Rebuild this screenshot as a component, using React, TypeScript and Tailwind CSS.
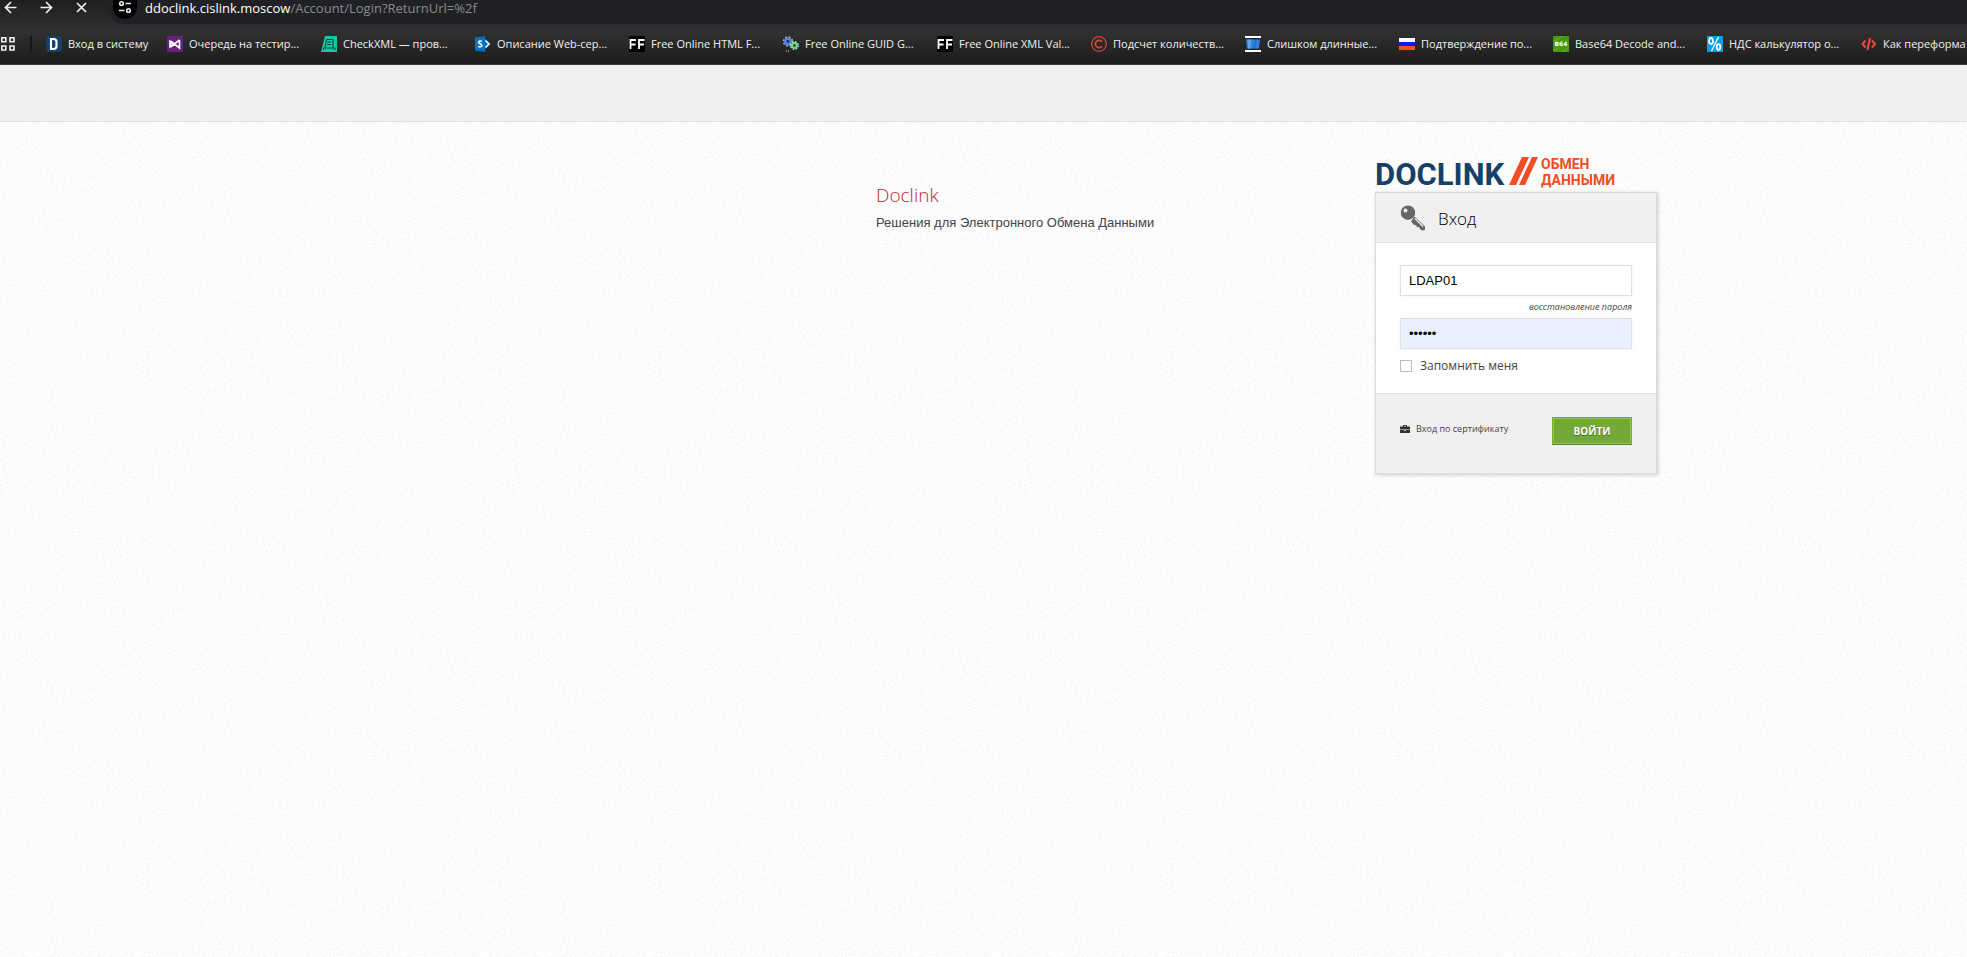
import React from 'react';

const DIcon: React.FC = () => (
    <svg width="16" height="16" viewBox="0 0 16 16" fill="none" className="shrink-0">
        <rect width="16" height="16" rx="3" fill="#163f66" />
        <path d="M5 3H7.500A3 3 0 0110.500 6v4a3 3 0 01-3 3H5z" stroke="#fff" strokeWidth="2.200" />
    </svg>
);

const VisualStudioIcon: React.FC = () => (
    <svg width="16" height="16" viewBox="0 0 16 16" fill="none" className="shrink-0">
        <rect width="16" height="16" fill="#68217a" />
        <path d="M3 5.500v5l2.500-2.500L3 5.500zM12.500 4v8L3.500 5M12.500 4L3.500 11" stroke="#fff" strokeWidth="1.600" />
    </svg>
);

const CheckXmlIcon: React.FC = () => (
    <svg width="16" height="16" viewBox="0 0 16 16" fill="none" className="shrink-0">
        <path d="M4 0h12v16H0z" fill="#0fc9a5" />
        <path d="M5.500 3.500H12v8.500M5.500 3.500L4 12M6.500 6h3.500M6 8.500h4M2.500 14v-2H14v2" stroke="#1d3d3b" />
    </svg>
);

const SharePointIcon: React.FC = () => (
    <svg width="16" height="16" viewBox="0 0 16 16" fill="none" className="shrink-0">
        <path d="M0 1.500L10 0v16L0 14.500z" fill="#0072c6" />
        <path d="M10 2.500l6 5.500-6 5.500z" fill="#0072c6" />
        <path d="M10.500 4.500L14 8l-3.500 3.500" stroke="#fff" strokeWidth="1.500" />
        <path d="M7 5.500C5.500 4.500 3.500 5 3.500 6.300 3.500 8 7 7.500 7 9.500c0 1.500-2.200 1.800-3.700.8" stroke="#fff" strokeWidth="1.400" />
    </svg>
);

const FreeFormatterIcon: React.FC = () => (
    <svg width="16" height="16" viewBox="0 0 16 16" fill="none" className="shrink-0">
        <rect width="16" height="16" fill="#000" />
        <path d="M1.500 13V4H7M1.500 8.500h5M10 13V4h5.500M10 8.500h5" stroke="#fff" strokeWidth="1.800" />
    </svg>
);

const GearsIcon: React.FC = () => (
    <svg width="16" height="16" viewBox="0 0 16 16" fill="none" className="shrink-0">
        <circle cx="5" cy="5.500" r="4.300" stroke="#a9c1f0" strokeWidth="1.800" strokeDasharray="1.700 1.700" />
        <circle cx="5" cy="5.500" r="2.700" stroke="#5584e0" strokeWidth="2.600" />
        <circle cx="11.500" cy="9.500" r="3.800" stroke="#b4efb9" strokeWidth="1.600" strokeDasharray="1.500 1.500" />
        <circle cx="11.500" cy="9.500" r="2.300" stroke="#6fd886" strokeWidth="2.200" />
        <path d="M3 15h1M5 15h1" stroke="#ddd" />
    </svg>
);

const CopyrightIcon: React.FC = () => (
    <svg width="16" height="16" viewBox="0 0 16 16" fill="none" stroke="#d6423b" className="shrink-0">
        <circle cx="8" cy="8" r="7.300" strokeWidth="1.300" />
        <path d="M11 5.800a3.700 3.700 0 100 4.400" strokeWidth="1.700" />
    </svg>
);

const WindowIcon: React.FC = () => (
    <svg width="16" height="16" viewBox="0 0 16 16" fill="none" className="shrink-0">
        <rect width="16" height="16" fill="#fff" />
        <rect y="2" width="16" height="12" fill="#1d2733" />
        <path d="M1 3.500h14L14 12.500H2z" fill="#2f7fd8" />
        <path d="M2.500 3.500h4l-1 9H3z" fill="#5ba2e8" />
        <path d="M11 3.500L9.500 12.500" stroke="#1f62b4" />
    </svg>
);

const FlagIcon: React.FC = () => (
    <svg width="16" height="16" viewBox="0 0 16 16" fill="none" className="shrink-0">
        <rect y="2" width="16" height="4" fill="#fff" />
        <rect y="6" width="16" height="4" fill="#1414f5" />
        <rect y="10" width="16" height="4" fill="#f0501c" />
    </svg>
);

const Base64Icon: React.FC = () => (
    <svg width="16" height="16" viewBox="0 0 16 16" fill="none" className="shrink-0">
        <rect width="16" height="16" rx="1" fill="#459b0b" />
        <path d="M0 5Q6 4 9 0M0 14Q5 14 6 11M8 16q6-1 8-6" stroke="#65b52c" />
        <text x="8" y="10" textAnchor="middle" fontSize="6" fontWeight="700" fill="#fff" fontFamily="DejaVu Sans, sans-serif">B64</text>
    </svg>
);

const PercentIcon: React.FC = () => (
    <svg width="16" height="16" viewBox="0 0 16 16" fill="none" stroke="#fff" className="shrink-0">
        <rect width="16" height="16" fill="#009fe3" stroke="none" />
        <ellipse cx="4" cy="5" rx="2" ry="3" strokeWidth="1.800" />
        <ellipse cx="11.500" cy="11" rx="1.800" ry="2.800" strokeWidth="1.800" />
        <path d="M11.500 1L4.500 15" strokeWidth="1.400" />
    </svg>
);

const CodeIcon: React.FC = () => (
    <svg width="16" height="16" viewBox="0 0 16 16" fill="none" stroke="#e8473b" strokeWidth="2.200" className="shrink-0">
        <path d="M4.500 4.500L1.500 8l3 3.500M11 4.500L14 8l-3 3.500M9 2L6.500 14" />
    </svg>
);

const BOOKMARKS = [
    { title: 'Вход в систему', icon: <DIcon />, width: 'w-[121px]' },
    { title: 'Очередь на тестир...', icon: <VisualStudioIcon />, width: 'w-[154px]' },
    { title: 'CheckXML — пров...', icon: <CheckXmlIcon />, width: 'w-[154px]' },
    { title: 'Описание Web-сер...', icon: <SharePointIcon />, width: 'w-[154px]' },
    { title: 'Free Online HTML F...', icon: <FreeFormatterIcon />, width: 'w-[154px]' },
    { title: 'Free Online GUID G...', icon: <GearsIcon />, width: 'w-[154px]' },
    { title: 'Free Online XML Val...', icon: <FreeFormatterIcon />, width: 'w-[154px]' },
    { title: 'Подсчет количеств...', icon: <CopyrightIcon />, width: 'w-[154px]' },
    { title: 'Слишком длинные...', icon: <WindowIcon />, width: 'w-[154px]' },
    { title: 'Подтверждение по...', icon: <FlagIcon />, width: 'w-[154px]' },
    { title: 'Base64 Decode and...', icon: <Base64Icon />, width: 'w-[154px]' },
    { title: 'НДС калькулятор о...', icon: <PercentIcon />, width: 'w-[154px]' },
    { title: 'Как переформа', icon: <CodeIcon />, width: 'w-[154px]' },
];

const BrowserBar: React.FC = () => (
    <header className="overflow-hidden border-b border-[#3c3c3c] bg-linear-to-b from-[#1f1f1f] via-[#303030] to-[#1c1c1c] font-['Open_Sans','Noto_Sans',sans-serif] text-[#f0f0f0]">
        <div className="flex h-6">
            <div className="flex h-4 w-[108px] shrink-0 items-center">
                <button aria-label="Назад" className="w-7 pl-1">
                    <svg width="13" height="14" viewBox="0 0 13 14" fill="none" stroke="currentColor" strokeWidth="1.700">
                        <path d="M12.500 6.500H1.500M7 1L1.500 6.500 7 12" />
                    </svg>
                </button>
                <button aria-label="Вперёд" className="ml-3 w-7">
                    <svg width="13" height="14" viewBox="0 0 13 14" fill="none" stroke="currentColor" strokeWidth="1.700">
                        <path d="M.5 6.500h11M6 1L11.500 6.500 6 12" />
                    </svg>
                </button>
                <button aria-label="Остановить" className="ml-2">
                    <svg width="11" height="14" viewBox="0 0 11 14" fill="none" stroke="currentColor" strokeWidth="1.700">
                        <path d="M1 2l9 9M10 2l-9 9" />
                    </svg>
                </button>
            </div>
            <div className="flex flex-1 items-start gap-2 rounded-bl-2xl bg-[#202124] pl-[5px]">
                <button aria-label="Сведения о сайте" className="flex h-[19px] w-6 justify-center rounded-b-full bg-black">
                    <svg width="14" height="14" viewBox="0 0 14 14" fill="none" stroke="#e8e8e8" strokeWidth="1.600">
                        <circle cx="3.500" cy="3.500" r="1.800" />
                        <path d="M7.500 3.500H13M1 10.500h5.500" />
                        <circle cx="10.500" cy="10.500" r="1.800" />
                    </svg>
                </button>
                <p className="text-[13px] leading-4 text-[#8a8b8d]">
                    <span className="text-white">ddoclink.cislink.moscow</span>/Account/Login?ReturnUrl=%2f
                </p>
            </div>
        </div>
        <nav className="flex h-10 items-center text-[11px]">
            <button aria-label="Приложения" className="w-[30px] shrink-0">
                <svg width="16" height="16" viewBox="0 0 16 16" fill="none" stroke="currentColor" strokeWidth="1.600">
                    <path d="M1.800 1.800h4v4h-4zM10 1.800h4v4h-4zM1.800 10h4v4h-4zM10 10h4v4h-4z" />
                </svg>
            </button>
            <span className="mr-3.5 h-4 w-0.5 shrink-0 bg-[#171717]" />
            {BOOKMARKS.map((b, i) => (
                <a key={i} href="#" className={`flex shrink-0 items-center gap-1.5 whitespace-nowrap ${b.width}`}>
                    {b.icon}
                    {b.title}
                </a>
            ))}
        </nav>
    </header>
);

const PaperTexture: React.FC = () => (
    <svg aria-hidden="true" className="absolute inset-0 -z-10 h-full w-full">
        <filter id="paper">
            <feTurbulence type="fractalNoise" baseFrequency="0.5" numOctaves="3" stitchTiles="stitch" />
            <feColorMatrix values="0 0 0 0 0  0 0 0 0 0  0 0 0 0 0  0.100 0 0 0 -0.044" />
        </filter>
        <rect width="100%" height="100%" filter="url(#paper)" />
    </svg>
);

const Logo: React.FC = () => (
    <svg width="250" height="32" viewBox="0 0 250 32" role="img" aria-label="Doclink" className="font-[Roboto,sans-serif] font-bold">
        <text x="0" y="28" fontSize="31" fill="#174066">DOCLINK</text>
        <path d="M147 0h7l-13 28h-7zM157 0h6l-13 28h-6z" fill="#f04e23" />
        <text x="166" y="12" fontSize="14" fill="#f04e23">ОБМЕН</text>
        <text x="166" y="28" fontSize="14" fill="#f04e23">ДАННЫМИ</text>
    </svg>
);

const KeyIcon: React.FC = () => (
    <svg width="26" height="26" viewBox="0 0 26 26" fill="#666">
        <path fillRule="evenodd" d="M8 .5a7.200 7.200 0 110 14.400A7.200 7.200 0 018 .5zM5.500 3.500a2 2 0 100 4 2 2 0 000-4z" />
        <path d="M14.500 11.500l10.500 10v3.500l-3 .5-2-1.500-1-2-2 .2-1-2-2-.2-3-3.500z" />
        <path d="M15 13.500l8 8" stroke="#f0f0f0" strokeWidth="1.200" />
    </svg>
);

const BriefcaseIcon: React.FC = () => (
    <svg width="10" height="9" viewBox="0 0 10 9" fill="#333">
        <path d="M3 1.500V0h4v1.500h3v3H0v-3zM4 1.500h2V.8H4zM0 5h4v.8h2V5h4v3H0z" fillRule="evenodd" />
    </svg>
);

const LoginForm: React.FC = () => (
    <form className="border border-[#dadada] bg-white font-['Open_Sans','Noto_Sans',sans-serif] text-[#444] shadow-[1px_1px_4px_rgba(0,0,0,0.2)]">
        <div className="flex h-[50px] items-center gap-3 border-b border-[#e2e2e2] bg-[#f0f0f0] px-6">
            <KeyIcon />
            <h2 className="pt-0.5 text-[17px] font-light text-black">Вход</h2>
        </div>
        <div className="px-6 pt-[22px] pb-[19px]">
            <input
                aria-label="Логин"
                type="text"
                defaultValue="LDAP01"
                className="block h-[31px] w-full border border-[#dfdfdf] px-2 font-['Liberation_Sans',Arial,sans-serif] text-[13px] text-black shadow-[0_0_4px_rgba(0,0,0,0.05)]"
            />
            <div className="flex h-[22px] items-center justify-end">
                <a href="#" className="text-[9px] italic">восстановление пароля</a>
            </div>
            <input
                aria-label="Пароль"
                type="password"
                defaultValue="ldap01"
                className="block h-[31px] w-full border border-[#dfdfdf] bg-[#e8f0fe] px-2 font-['Liberation_Sans',Arial,sans-serif] text-[13px] text-black shadow-[0_0_4px_rgba(0,0,0,0.05)]"
            />
            <label className="mt-[9px] flex items-center gap-2 text-xs">
                <input type="checkbox" className="size-3 appearance-none border border-[#bbb] bg-white" />
                Запомнить меня
            </label>
        </div>
        <div className="flex h-20 items-start justify-between border-t border-[#e2e2e2] bg-[#f0f0f0] px-6 pt-[23px]">
            <a href="#" className="flex h-6 items-center gap-1.5 text-[9px]">
                <BriefcaseIcon />
                Вход по сертификату
            </a>
            <button type="button" className="h-7 w-20 border border-[#6db31b] border-b-[#54832a] bg-[#74a838] text-[10px] font-bold text-white inset-shadow-[0_0_0_1px_#91c45c] text-shadow-[0_1px_1px_#00000066]">
                ВОЙТИ
            </button>
        </div>
    </form>
);

const App: React.FC = () => {
    return (
        <div className="relative isolate flex min-h-screen flex-col overflow-hidden bg-[#fefefe]">
            <PaperTexture />
            <BrowserBar />
            <div className="h-[57px] border-b border-[#e0e0e0] bg-[#f0f0f0]" />
            <main className="flex justify-end pr-[310px]">
                <section className="w-[499px] pt-[61px]">
                    <h1 className="font-['Open_Sans','Noto_Sans',sans-serif] text-[19px] leading-6 font-light text-[#c81e1e]">Doclink</h1>
                    <p className="mt-1.5 font-['Liberation_Sans',Arial,sans-serif] text-[13px] leading-5 text-[#444]">
                        Решения для Электронного Обмена Данными
                    </p>
                </section>
                <section className="flex w-[282px] flex-col gap-[3px] pt-[35px]">
                    <Logo />
                    <LoginForm />
                </section>
            </main>
        </div>
    );
};

export default App;
